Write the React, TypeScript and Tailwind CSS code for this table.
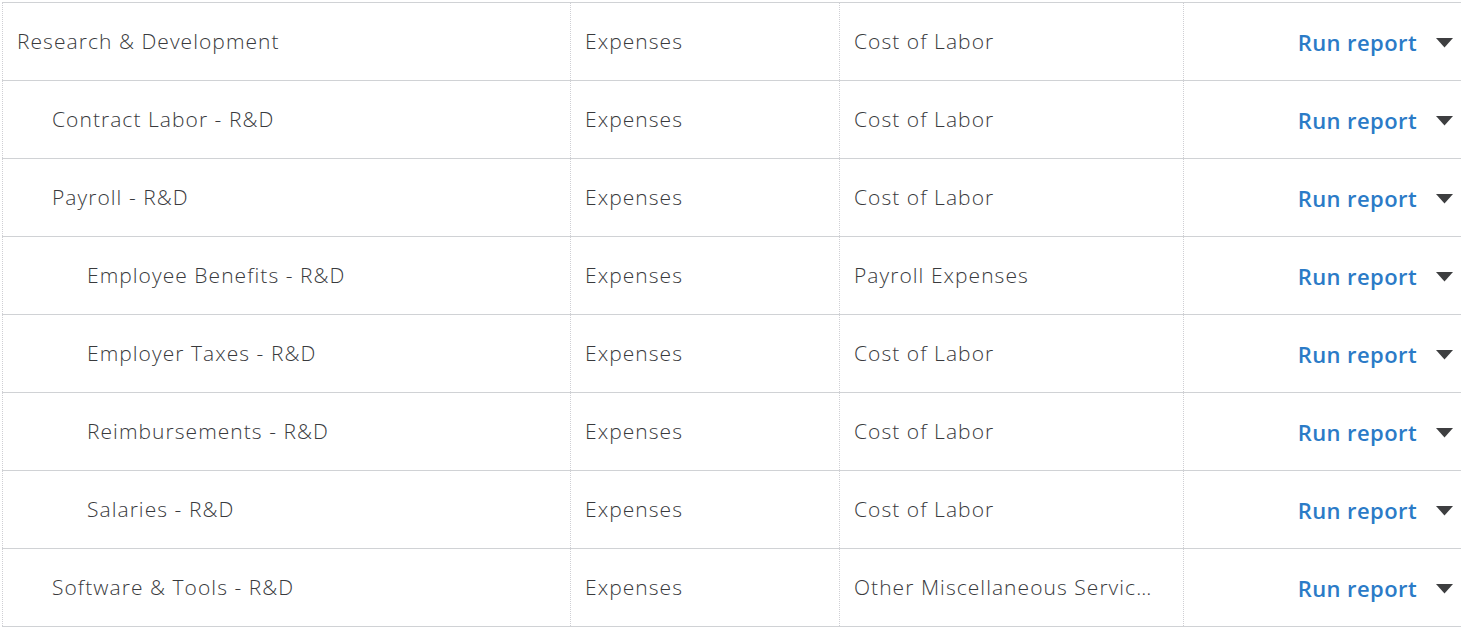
import React from "react";

type Row = { name: string; level: number; type: string; detail: string };

const rows: Row[] = [
  { name: "Research & Development", level: 0, type: "Expenses", detail: "Cost of Labor" },
  { name: "Contract Labor - R&D", level: 1, type: "Expenses", detail: "Cost of Labor" },
  { name: "Payroll - R&D", level: 1, type: "Expenses", detail: "Cost of Labor" },
  { name: "Employee Benefits - R&D", level: 2, type: "Expenses", detail: "Payroll Expenses" },
  { name: "Employer Taxes - R&D", level: 2, type: "Expenses", detail: "Cost of Labor" },
  { name: "Reimbursements - R&D", level: 2, type: "Expenses", detail: "Cost of Labor" },
  { name: "Salaries - R&D", level: 2, type: "Expenses", detail: "Cost of Labor" },
  { name: "Software & Tools - R&D", level: 1, type: "Expenses", detail: "Other Miscellaneous Service Cost" },
];

const padClass = ["pl-[14px]", "pl-[49px]", "pl-[84px]"];

export default function App() {
  return (
    <div
      className="bg-white w-[1468px] h-[629px] overflow-hidden pt-[2px] pl-[2px]"
      style={{ fontFamily: "'Open Sans', sans-serif" }}
    >
      <div className="w-[1459px] border-t border-[#d0d2d5]">
        {rows.map((r, i) => (
          <div
            key={i}
            className="flex h-[78px] border-b border-[#d0d2d5] text-[21px] tracking-[1.05px] font-light text-[#393a3d]"
          >
            <div
              className={`w-[568px] flex items-center border-l border-dotted border-[#cfcfd4] ${padClass[r.level]}`}
            >
              <span className="whitespace-nowrap">{r.name}</span>
            </div>
            <div className="w-[269px] flex items-center pl-[14px] border-l border-dotted border-[#cfcfd4]">
              {r.type}
            </div>
            <div className="w-[344px] flex items-center pl-[14px] pr-[22px] border-l border-dotted border-[#cfcfd4] min-w-0">
              <span className="truncate">{r.detail}</span>
            </div>
            <div className="flex-1 flex items-center justify-end pr-[8px] border-l border-dotted border-[#cfcfd4] pt-[2px]">
              <span className="text-[#2b7bc7] font-semibold text-[22px] tracking-[0.4px]">Run report</span>
              <svg width="17" height="10" viewBox="0 0 17 10" className="ml-[19px] mt-[1px]">
                <path d="M0 0 L17 0 L8.5 9.5 Z" fill="#3d3e40" />
              </svg>
            </div>
          </div>
        ))}
      </div>
    </div>
  );
}
